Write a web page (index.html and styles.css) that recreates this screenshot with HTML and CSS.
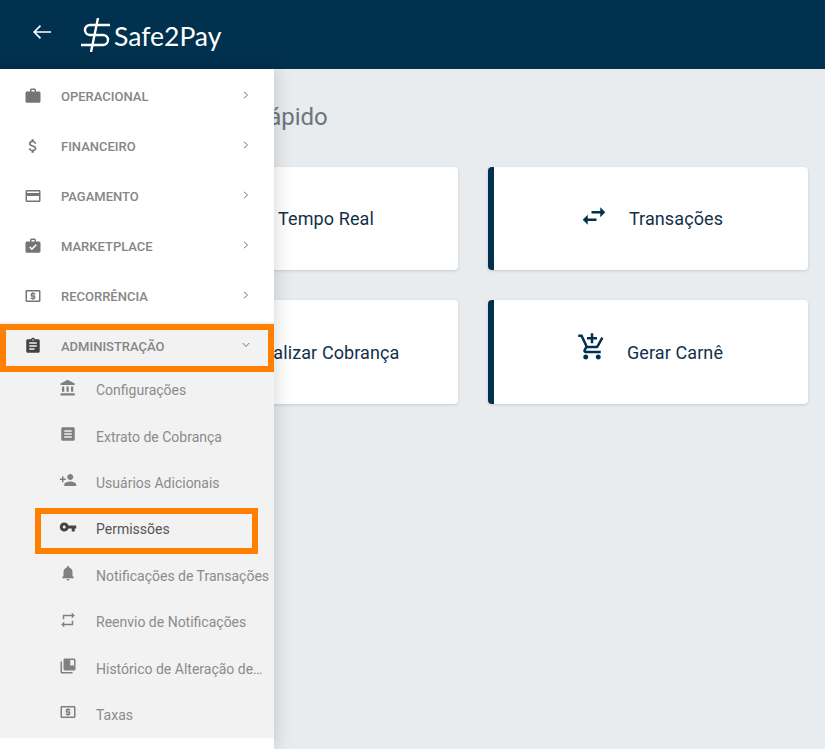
FILE: index.html
```html
<!DOCTYPE html>
<html>

    <head>
        <meta charset="UTF-8">
        <title>Safe2Pay</title>
        <link rel="stylesheet" href="styles.css">
    </head>
    <body>
        <header class="topbar">
            <svg class="back-arrow" viewBox="0 0 18 14"><path d="M18 7H1M7.500 .7 1.200 7l6.300 6.300"/></svg>
            <svg class="logo-mark" viewBox="0 0 30 34"><path d="M29 7H9a5 5 0 0 0 0 10h13a5 5 0 0 1 0 10H0M17 0 10 34"/></svg>
            <span class="logo-text">Safe2Pay</span>
        </header>

        <main class="content">
            <h1 class="title">Acesso Rápido</h1>
            <div class="cards">
                <a class="card">
                    <svg class="card-icon" viewBox="0 0 24 24"><path d="M12 8v5l4 2-1 1.500-5-3V8zM12 3a9 9 0 1 1 0 18 9 9 0 0 1 0-18z"/></svg>
                    <span>Tempo Real</span>
                </a>
                <a class="card">
                    <svg class="card-icon" viewBox="0 0 24 24"><path d="M6.990 11 3 15l3.990 4v-3H14v-2H6.990zM21 9l-3.990-4v3H10v2h7.010v3z"/></svg>
                    <span>Transações</span>
                </a>
                <a class="card">
                    <svg class="card-icon" viewBox="0 0 24 24"><path d="M20 4H4c-1.110 0-1.990.890-1.990 2L2 18c0 1.110.890 2 2 2h16c1.110 0 2-.890 2-2V6c0-1.110-.890-2-2-2zm0 14H4v-6h16v6zm0-10H4V6h16v2z"/></svg>
                    <span>Realizar Cobrança</span>
                </a>
                <a class="card">
                    <svg class="card-icon cart" viewBox="0 0 24 24"><path d="M11 9h2V6h3V4h-3V1h-2v3H8v2h3v3zm-4 9c-1.100 0-1.990.900-1.990 2S5.900 22 7 22s2-.900 2-2-.900-2-2-2zm10 0c-1.100 0-1.990.900-1.990 2s.890 2 1.990 2 2-.900 2-2-.900-2-2-2zm-9.830-3.250.030-.120.900-1.630h7.450c.750 0 1.410-.410 1.750-1.030l3.860-7.010L19.420 4h-.010l-1.100 2-2.760 5H8.530l-.130-.270L6.160 6l-.950-2-.940-2H1v2h2l3.600 7.590-1.350 2.450c-.160.280-.250.610-.250.960 0 1.100.900 2 2 2h12v-2H7.420c-.130 0-.250-.110-.250-.250z"/></svg>
                    <span>Gerar Carnê</span>
                </a>
            </div>
        </main>

        <nav class="sidebar">
            <ul class="menu">
                <li class="menu-item">
                    <svg class="icon" viewBox="0 0 24 24"><path d="M20 6h-4V4c0-1.110-.890-2-2-2h-4c-1.110 0-2 .890-2 2v2H4c-1.110 0-1.990.890-1.990 2L2 19c0 1.110.890 2 2 2h16c1.110 0 2-.890 2-2V8c0-1.110-.890-2-2-2zm-6 0h-4V4h4v2z"/></svg>
                    <span class="menu-label">Operacional</span>
                    <svg class="chevron" viewBox="0 0 6 8"><path d="M1 .8 4.500 4 1 7.200"/></svg>
                </li>
                <li class="menu-item">
                    <svg class="icon" viewBox="0 0 24 24"><path d="M11.800 10.900c-2.270-.590-3-1.200-3-2.150 0-1.090 1.010-1.850 2.700-1.850 1.780 0 2.440.850 2.500 2.100h2.210c-.070-1.720-1.120-3.300-3.210-3.810V3h-3v2.160c-1.940.420-3.500 1.680-3.500 3.610 0 2.310 1.910 3.460 4.700 4.130 2.500.600 3 1.480 3 2.410 0 .690-.490 1.790-2.700 1.790-2.060 0-2.870-.920-2.980-2.100h-2.200c.120 2.190 1.760 3.420 3.680 3.830V21h3v-2.150c1.950-.370 3.500-1.500 3.500-3.550 0-2.840-2.430-3.810-4.700-4.400z"/></svg>
                    <span class="menu-label">Financeiro</span>
                    <svg class="chevron" viewBox="0 0 6 8"><path d="M1 .8 4.500 4 1 7.200"/></svg>
                </li>
                <li class="menu-item">
                    <svg class="icon" viewBox="0 0 24 24"><path d="M20 4H4c-1.110 0-1.990.890-1.990 2L2 18c0 1.110.890 2 2 2h16c1.110 0 2-.890 2-2V6c0-1.110-.890-2-2-2zm0 14H4v-6h16v6zm0-10H4V6h16v2z"/></svg>
                    <span class="menu-label">Pagamento</span>
                    <svg class="chevron" viewBox="0 0 6 8"><path d="M1 .8 4.500 4 1 7.200"/></svg>
                </li>
                <li class="menu-item">
                    <svg class="icon" viewBox="0 0 24 24"><path d="M10 2h4a2 2 0 0 1 2 2v2h4a2 2 0 0 1 2 2v11a2 2 0 0 1-2 2H4c-1.110 0-2-.900-2-2V8c0-1.110.890-2 2-2h4V4c0-1.110.890-2 2-2m4 4V4h-4v2h4m-3.500 11.500 6.590-6.590-1.410-1.410-5.180 5.170-2.180-2.170-1.410 1.410 3.590 3.590z"/></svg>
                    <span class="menu-label">Marketplace</span>
                    <svg class="chevron" viewBox="0 0 6 8"><path d="M1 .8 4.500 4 1 7.200"/></svg>
                </li>
                <li class="menu-item">
                    <svg class="icon" viewBox="0 0 24 24"><path d="M11 17h2v-1h1c.550 0 1-.450 1-1v-3c0-.550-.450-1-1-1h-3v-1h4V8h-2V7h-2v1h-1c-.550 0-1 .450-1 1v3c0 .550.450 1 1 1h3v1H9v2h2v1zm9-13H4c-1.110 0-1.990.890-1.990 2L2 18c0 1.110.890 2 2 2h16c1.110 0 2-.890 2-2V6c0-1.110-.890-2-2-2zm0 14H4V6h16v12z"/></svg>
                    <span class="menu-label">Recorrência</span>
                    <svg class="chevron" viewBox="0 0 6 8"><path d="M1 .8 4.500 4 1 7.200"/></svg>
                </li>
                <li class="menu-item open">
                    <svg class="icon" viewBox="0 0 24 24"><path d="M19 3h-4.180C14.400 1.840 13.300 1 12 1c-1.300 0-2.400.840-2.820 2H5c-1.100 0-2 .900-2 2v14c0 1.100.900 2 2 2h14c1.100 0 2-.900 2-2V5c0-1.100-.900-2-2-2zm-7 0c.550 0 1 .450 1 1s-.450 1-1 1-1-.450-1-1 .450-1 1-1zm2 14H7v-2h7v2zm3-4H7v-2h10v2zm0-4H7V7h10v2z"/></svg>
                    <span class="menu-label">Administração</span>
                    <svg class="chevron down" viewBox="0 0 8 6"><path d="M.8 1 4 4.500 7.200 1"/></svg>
                    <span class="mark"></span>
                </li>
            </ul>
            <ul class="submenu">
                <li class="sub-item">
                    <svg class="icon" viewBox="0 0 24 24"><path d="M4 10v7h3v-7H4zm6 0v7h3v-7h-3zM2 22h19v-3H2v3zm14-12v7h3v-7h-3zm-4.500-9L2 6v2h19V6l-9.500-5z"/></svg>
                    <span class="sub-label">Configurações</span>
                </li>
                <li class="sub-item">
                    <svg class="icon" viewBox="0 0 24 24"><path d="M19 3H5c-1.100 0-2 .900-2 2v14c0 1.100.900 2 2 2h14c1.100 0 2-.900 2-2V5c0-1.100-.900-2-2-2zm-2 14H7v-2h10v2zm0-4H7v-2h10v2zm0-4H7V7h10v2z"/></svg>
                    <span class="sub-label">Extrato de Cobrança</span>
                </li>
                <li class="sub-item">
                    <svg class="icon" viewBox="0 0 24 24"><path d="M15 12c2.210 0 4-1.790 4-4s-1.790-4-4-4-4 1.790-4 4 1.790 4 4 4zm-9-2V7H4v3H1v2h3v3h2v-3h3v-2H6zm9 4c-2.670 0-8 1.340-8 4v2h16v-2c0-2.660-5.330-4-8-4z"/></svg>
                    <span class="sub-label">Usuários Adicionais</span>
                </li>
                <li class="sub-item current">
                    <svg class="icon" viewBox="0 0 24 24"><path d="M12.650 10C11.830 7.670 9.610 6 7 6c-3.310 0-6 2.690-6 6s2.690 6 6 6c2.610 0 4.830-1.670 5.650-4H17v4h4v-4h2v-4H12.650zM7 14c-1.100 0-2-.900-2-2s.900-2 2-2 2 .900 2 2-.900 2-2 2z"/></svg>
                    <span class="sub-label">Permissões</span>
                    <span class="mark"></span>
                </li>
                <li class="sub-item">
                    <svg class="icon" viewBox="0 0 24 24"><path d="M12 22c1.100 0 2-.900 2-2h-4c0 1.100.890 2 2 2zm6-6v-5c0-3.070-1.640-5.640-4.500-6.320V4c0-.830-.670-1.500-1.500-1.500s-1.500.670-1.500 1.500v.680C7.630 5.360 6 7.920 6 11v5l-2 2v1h16v-1l-2-2z"/></svg>
                    <span class="sub-label">Notificações de Transações</span>
                </li>
                <li class="sub-item">
                    <svg class="icon" viewBox="0 0 24 24"><path d="M7 7h10v3l4-4-4-4v3H5v6h2V7zm10 10H7v-3l-4 4 4 4v-3h12v-6h-2v4z"/></svg>
                    <span class="sub-label">Reenvio de Notificações</span>
                </li>
                <li class="sub-item">
                    <svg class="icon" viewBox="0 0 24 24"><path d="M4 6H2v14c0 1.100.900 2 2 2h14v-2H4V6zm16-4H8c-1.100 0-2 .900-2 2v12c0 1.100.900 2 2 2h12c1.100 0 2-.900 2-2V4c0-1.100-.900-2-2-2zm0 10-2.500-1.500L15 12V4h5v8z"/></svg>
                    <span class="sub-label">Histórico de Alteração de…</span>
                </li>
                <li class="sub-item">
                    <svg class="icon" viewBox="0 0 24 24"><path d="M11 17h2v-1h1c.550 0 1-.450 1-1v-3c0-.550-.450-1-1-1h-3v-1h4V8h-2V7h-2v1h-1c-.550 0-1 .450-1 1v3c0 .550.450 1 1 1h3v1H9v2h2v1zm9-13H4c-1.110 0-1.990.890-1.990 2L2 18c0 1.110.890 2 2 2h16c1.110 0 2-.890 2-2V6c0-1.110-.890-2-2-2zm0 14H4V6h16v12z"/></svg>
                    <span class="sub-label">Taxas</span>
                </li>
            </ul>
        </nav>
    </body>

</html>
```

FILE: styles.css
```css
* {
    padding: 0;
    margin: 0;
    box-sizing: border-box;
}

ul,
li {
    list-style: none;
}

body {
    position: relative;
    height: 749px;
    overflow: hidden;
    background-color: #e9ecef;
    font-family: Roboto, "Liberation Sans", sans-serif;
}

.topbar {
    display: flex;
    align-items: center;
    height: 69px;
    padding-left: 33px;
    background-color: #00314f;
}

.back-arrow {
    width: 18px;
    height: 14px;
    margin-top: -5px;
    fill: none;
    stroke: #fff;
    stroke-width: 1.7;
}

.logo-mark {
    width: 30px;
    height: 34px;
    margin-left: 30px;
    margin-top: 1px;
    fill: none;
    stroke: #fff;
    stroke-width: 2.4;
}

.logo-text {
    margin-left: 3px;
    margin-top: 3px;
    font-family: Lato, sans-serif;
    font-size: 26.500px;
    font-weight: 400;
    color: #fff;
}

.content {
    padding: 32px 17px 0 138px;
}

.title {
    height: 66px;
    padding-left: 30px;
    font-size: 24px;
    line-height: 32px;
    font-weight: 400;
    color: #6c757d;
}

.cards {
    display: grid;
    grid-template-columns: 320px 320px;
    grid-template-rows: 103px 104px;
    gap: 30px;
}

.card {
    display: flex;
    align-items: center;
    justify-content: center;
    gap: 20px;
    background-color: #fff;
    border-left: 6px solid #00314f;
    border-radius: 4px;
    box-shadow: 0 1px 3px rgba(0, 0, 0, .15);
    font-size: 18px;
    letter-spacing: .1px;
    color: #12304a;
}

.card-icon {
    width: 30px;
    height: 30px;
    margin-top: -6px;
    fill: #00314f;
}

.card-icon.cart {
    margin-top: -11px;
    margin-left: -2px;
}

.sidebar {
    position: absolute;
    left: 0;
    top: 69px;
    bottom: 0;
    width: 274px;
    background-color: #fff;
    box-shadow: 0 0 18px rgba(0, 0, 0, .18);
}

.menu {
    padding-top: 3px;
}

.menu-item {
    position: relative;
    display: flex;
    align-items: center;
    height: 50px;
    padding-left: 24px;
}

.menu-item.open {
    background-color: #f2f2f2;
}

.icon {
    flex: none;
    width: 18px;
    height: 18px;
    margin-top: -2px;
    fill: #757575;
}

.menu-label {
    flex: 1;
    margin-left: 19px;
    padding-bottom: 2px;
    font-size: 13px;
    font-weight: 500;
    text-transform: uppercase;
    color: #868686;
}

.chevron {
    width: 6px;
    height: 8px;
    margin-right: 25px;
    margin-top: -4px;
    fill: none;
    stroke: #777;
    stroke-width: 1;
}

.chevron.down {
    width: 8px;
    height: 6px;
    margin-right: 24px;
}

.sub-item .icon {
    margin-top: -5px;
    fill: #808080;
}

.open .icon,
.sub-item.current .icon {
    fill: #444;
}

.submenu {
    margin-top: -5px;
    background-color: #f2f2f2;
}

.sub-item {
    position: relative;
    display: flex;
    align-items: center;
    height: 46.400px;
    padding-left: 59px;
}

.sub-label {
    margin-left: 19px;
    white-space: nowrap;
    font-size: 14px;
    color: #8b8b8b;
}

.current .sub-label {
    color: #555;
}

.mark {
    position: absolute;
    border: 6px solid #ff8000;
}

.open .mark {
    left: 0;
    right: 0;
    top: 2px;
    bottom: 0;
}

.current .mark {
    left: 35px;
    right: 16px;
    top: 2px;
    bottom: -1px;
}
```
